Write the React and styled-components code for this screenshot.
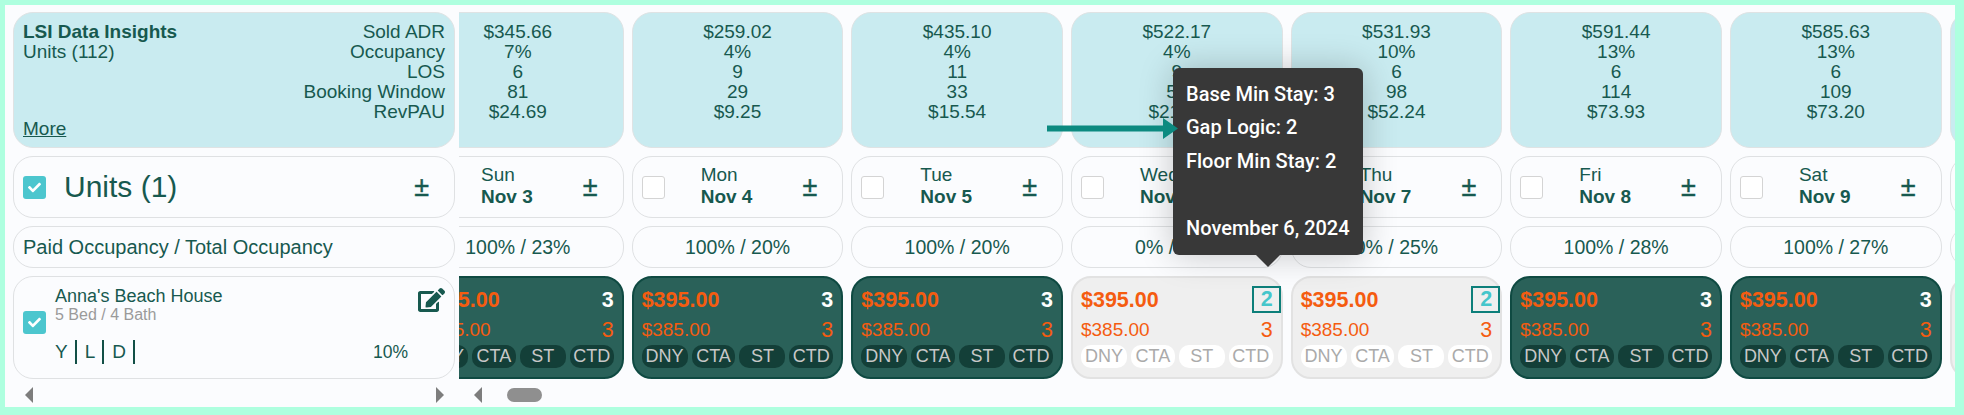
import React from "react";
import styled, { createGlobalStyle } from "styled-components";
import { FaEdit, FaCheck } from "react-icons/fa";

const INK = "#17594f";

const Global = createGlobalStyle`
  html, body { margin: 0; padding: 0; background: #aeffdf; }
  * { box-sizing: border-box; }
  body { font-family: "Liberation Sans", Arial, sans-serif; color: ${INK}; }
`;

const Frame = styled.div`
  width: 1964px;
  height: 415px;
  padding: 5px 9px 8px 5px;
  overflow: hidden;
`;

const Inner = styled.div`
  position: relative;
  display: flex;
  height: 100%;
  background: #fbfcfe;
`;

const LeftPanel = styled.div`
  flex: 0 0 454px;
  display: flex;
  flex-direction: column;
  gap: 8px;
  padding: 7px 4px 0 8px;
`;

const Scroller = styled.div`
  flex: 1;
  min-width: 0;
  overflow: hidden;
  display: flex;
  flex-direction: column;
  gap: 8px;
  padding-top: 7px;
`;

const DayRow = styled.div`
  display: flex;
  gap: 8px;
  margin-left: -47px;
`;

const InsightCard = styled.div`
  height: 136px;
  padding: 9px 9px 0 9px;
  background: #c9ebf0;
  border: 1px solid #dfe3e4;
  border-radius: 20px;
  font-size: 19px;
  line-height: 20px;
  display: flex;
  justify-content: space-between;
`;

const InsightLeft = styled.div`
  display: flex;
  flex-direction: column;
  align-items: flex-start;
`;

const InsightTitle = styled.strong`
  font-weight: 700;
`;

const MoreLink = styled.a`
  margin-top: auto;
  margin-bottom: 8px;
  text-decoration: underline;
  color: inherit;
`;

const InsightLabels = styled.div`
  text-align: right;
`;

const InsightDay = styled.div`
  flex: 0 0 211.67px;
  height: 136px;
  padding-top: 9px;
  background: #c9ebf0;
  border: 1px solid #dfe3e4;
  border-radius: 20px;
  font-size: 19px;
  line-height: 20px;
  text-align: center;
`;

const HeaderCard = styled.div`
  height: 62px;
  display: flex;
  align-items: center;
  padding: 0 25px 0 9px;
  background: #fbfcfe;
  border: 1px solid #dfe1e3;
  border-radius: 20px;
`;

const UnitsTitle = styled.span`
  flex: 1;
  margin-left: 18px;
  font-size: 30px;
  line-height: 34px;
`;

const PlusMinus = styled.span`
  font-size: 27px;
  line-height: 30px;
  font-weight: 400;
  -webkit-text-stroke: 0.4px ${INK};
`;

const DayHeader = styled.div`
  flex: 0 0 211.67px;
  height: 62px;
  display: flex;
  align-items: center;
  padding: 0 25px 0 9px;
  background: #fbfcfe;
  border: 1px solid #dfe1e3;
  border-radius: 20px;
`;

const DayLabel = styled.div`
  flex: 1;
  margin-left: 36px;
  padding-bottom: 2px;
  font-size: 19px;
  line-height: 22px;
`;

const DayDate = styled.div`
  font-weight: 700;
`;

const Box = styled.span`
  flex: none;
  width: 23px;
  height: 23px;
  border-radius: 3px;
  display: flex;
  align-items: center;
  justify-content: center;
  background: ${(p) => (p.$checked ? "#4cc6ce" : "#fff")};
  border: ${(p) => (p.$checked ? "none" : "1px solid #d4d4d4")};
  color: #fff;
  font-size: 13px;
`;

const OccLabel = styled.div`
  height: 42px;
  display: flex;
  align-items: center;
  padding-left: 9px;
  border: 1px solid #dfe1e3;
  border-radius: 20px;
  font-size: 20px;
`;

const OccCell = styled.div`
  flex: 0 0 211.67px;
  height: 42px;
  display: flex;
  align-items: center;
  justify-content: center;
  border: 1px solid #dfe1e3;
  border-radius: 20px;
  font-size: 19.5px;
`;

const UnitCard = styled.div`
  height: 103px;
  display: flex;
  padding: 9px 9px 0 9px;
  border: 1px solid #dfe1e3;
  border-radius: 20px;
`;

const UnitCheck = styled(Box)`
  margin-top: 25px;
`;

const UnitInfo = styled.div`
  flex: 1;
  margin-left: 9px;
  display: grid;
  grid-template-columns: 1fr auto;
  grid-template-rows: 20px 18px auto;
  align-content: start;
`;

const UnitName = styled.div`
  font-size: 18px;
  line-height: 20px;
`;

const UnitBeds = styled.div`
  grid-row: 2;
  font-size: 16px;
  line-height: 18px;
  color: #9a9a9a;
`;

const EditIcon = styled(FaEdit)`
  grid-column: 2;
  grid-row: 1 / span 2;
  margin-top: 2px;
  width: 27px;
  height: 24px;
  color: ${INK};
`;

const UnitFoot = styled.div`
  grid-column: 1 / span 2;
  margin-top: 16px;
  padding-right: 37px;
  display: flex;
  align-items: center;
  justify-content: space-between;
  font-size: 19px;
`;

const Flags = styled.div`
  display: flex;
`;

const Flag = styled.span`
  height: 24px;
  line-height: 24px;
  padding-right: 7px;
  margin-right: 8px;
  border-right: 2px solid #124f46;
`;

const Percent = styled.span`
  font-size: 17.5px;
`;

const RateCell = styled.div`
  flex: 0 0 211.67px;
  height: 103px;
  padding: 7px 8px 0 8px;
  border-radius: 20px;
  border: 2px solid ${(p) => (p.$booked ? "#0f4a42" : "#e2e2e2")};
  background: ${(p) => (p.$booked ? "#2a6159" : "#efefef")};
`;

const RateLine = styled.div`
  height: 30px;
  display: flex;
  align-items: center;
  justify-content: space-between;
  color: #f55c10;
  font-size: ${(p) => (p.$main ? "21.5px" : "19px")};
  font-weight: ${(p) => (p.$main ? 700 : 400)};
`;

const MinStay = styled.span`
  font-size: 21.5px;
  color: ${(p) => (p.$white ? "#fff" : "inherit")};
`;

const GapStay = styled.span`
  height: 27px;
  line-height: 23px;
  margin-top: -2px;
  margin-right: -8px;
  padding: 0 6px 0 7px;
  border: 2px solid #0d7f7a;
  color: #45c6cb;
  font-size: 21.5px;
`;

const Pills = styled.div`
  display: grid;
  grid-template-columns: 46fr 44fr 46fr 44fr;
  gap: 4px;
`;

const Pill = styled.span`
  height: 23px;
  line-height: 23px;
  border-radius: 10px;
  text-align: center;
  font-size: 18px;
  background: ${(p) => (p.$booked ? "#133f38" : "#fff")};
  color: ${(p) => (p.$booked ? "#c8c8c8" : "#aaa")};
`;

const ScrollBar = styled.div`
  display: flex;
  align-items: center;
  height: 16px;
`;

const LeftScroll = styled(ScrollBar)`
  justify-content: space-between;
  padding: 0 11px 0 12px;
`;

const RightScroll = styled(ScrollBar)`
  padding-left: 15px;
`;

const Arrow = styled.span`
  width: 0;
  height: 0;
  border-top: 8px solid transparent;
  border-bottom: 8px solid transparent;
  ${(p) =>
    p.$right
      ? "border-left: 8px solid #7d7d7d;"
      : "border-right: 8px solid #7d7d7d;"}
`;

const Thumb = styled.span`
  width: 35px;
  height: 14px;
  margin-left: 25px;
  background: #8f8f8f;
  border-radius: 8px;
`;

const Tooltip = styled.div`
  position: absolute;
  left: 1168px;
  top: 63px;
  width: 190px;
  height: 187px;
  padding: 10px 13px;
  background: #383838;
  border-radius: 6px;
  box-shadow: 0 0 34px rgba(0, 0, 0, 0.22);
  color: #fff;
  font-family: Roboto, "Liberation Sans", sans-serif;
  font-weight: 500;
  font-size: 20px;
  line-height: 33.4px;
  white-space: nowrap;
  &::after {
    content: "";
    position: absolute;
    left: 83px;
    bottom: -12px;
    border-left: 12px solid transparent;
    border-right: 12px solid transparent;
    border-top: 12px solid #383838;
  }
`;

const TooltipGap = styled.div`
  height: 33.4px;
`;

const Pointer = styled.svg`
  position: absolute;
  left: 1042px;
  top: 113px;
  width: 131px;
  height: 21px;
  overflow: visible;
`;

const DAYS = [
  { wd: "Sun", date: "Nov 3", vals: ["$345.66", "7%", "6", "81", "$24.69"], occ: "100% / 23%", booked: true },
  { wd: "Mon", date: "Nov 4", vals: ["$259.02", "4%", "9", "29", "$9.25"], occ: "100% / 20%", booked: true },
  { wd: "Tue", date: "Nov 5", vals: ["$435.10", "4%", "11", "33", "$15.54"], occ: "100% / 20%", booked: true },
  { wd: "Wed", date: "Nov 6", vals: ["$522.17", "4%", "9", "52", "$21.11"], occ: "0% / 24%", booked: false },
  { wd: "Thu", date: "Nov 7", vals: ["$531.93", "10%", "6", "98", "$52.24"], occ: "0% / 25%", booked: false },
  { wd: "Fri", date: "Nov 8", vals: ["$591.44", "13%", "6", "114", "$73.93"], occ: "100% / 28%", booked: true },
  { wd: "Sat", date: "Nov 9", vals: ["$585.63", "13%", "6", "109", "$73.20"], occ: "100% / 27%", booked: true },
  { wd: "Sun", date: "Nov 10", vals: ["$500.00", "9%", "6", "90", "$45.00"], occ: "100% / 20%", booked: false },
];

const TAGS = ["DNY", "CTA", "ST", "CTD"];

export default function App() {
  return (
    <Frame>
      <Global />
      <Inner>
        <LeftPanel>
          <InsightCard>
            <InsightLeft>
              <InsightTitle>LSI Data Insights</InsightTitle>
              <span>Units (112)</span>
              <MoreLink>More</MoreLink>
            </InsightLeft>
            <InsightLabels>
              <div>Sold ADR</div>
              <div>Occupancy</div>
              <div>LOS</div>
              <div>Booking Window</div>
              <div>RevPAU</div>
            </InsightLabels>
          </InsightCard>
          <HeaderCard>
            <Box $checked><FaCheck /></Box>
            <UnitsTitle>Units (1)</UnitsTitle>
            <PlusMinus>±</PlusMinus>
          </HeaderCard>
          <OccLabel>Paid Occupancy / Total Occupancy</OccLabel>
          <UnitCard>
            <UnitCheck $checked><FaCheck /></UnitCheck>
            <UnitInfo>
              <UnitName>Anna's Beach House</UnitName>
              <UnitBeds>5 Bed / 4 Bath</UnitBeds>
              <EditIcon />
              <UnitFoot>
                <Flags>
                  <Flag>Y</Flag>
                  <Flag>L</Flag>
                  <Flag>D</Flag>
                </Flags>
                <Percent>10%</Percent>
              </UnitFoot>
            </UnitInfo>
          </UnitCard>
          <LeftScroll>
            <Arrow />
            <Arrow $right />
          </LeftScroll>
        </LeftPanel>
        <Scroller>
          <DayRow>
            {DAYS.map((d) => (
              <InsightDay key={d.date}>
                {d.vals.map((v, i) => (
                  <div key={i}>{v}</div>
                ))}
              </InsightDay>
            ))}
          </DayRow>
          <DayRow>
            {DAYS.map((d) => (
              <DayHeader key={d.date}>
                <Box />
                <DayLabel>
                  <div>{d.wd}</div>
                  <DayDate>{d.date}</DayDate>
                </DayLabel>
                <PlusMinus>±</PlusMinus>
              </DayHeader>
            ))}
          </DayRow>
          <DayRow>
            {DAYS.map((d) => (
              <OccCell key={d.date}>{d.occ}</OccCell>
            ))}
          </DayRow>
          <DayRow>
            {DAYS.map((d) => (
              <RateCell key={d.date} $booked={d.booked}>
                <RateLine $main>
                  <span>$395.00</span>
                  {d.booked ? <MinStay $white>3</MinStay> : <GapStay>2</GapStay>}
                </RateLine>
                <RateLine>
                  <span>$385.00</span>
                  <MinStay>3</MinStay>
                </RateLine>
                <Pills>
                  {TAGS.map((t) => (
                    <Pill key={t} $booked={d.booked}>{t}</Pill>
                  ))}
                </Pills>
              </RateCell>
            ))}
          </DayRow>
          <RightScroll>
            <Arrow />
            <Thumb />
          </RightScroll>
        </Scroller>
        <Tooltip>
          <div>Base Min Stay: 3</div>
          <div>Gap Logic: 2</div>
          <div>Floor Min Stay: 2</div>
          <TooltipGap />
          <div>November 6, 2024</div>
        </Tooltip>
        <Pointer viewBox="0 0 131 21">
          <path d="M0 7.5H116V0L131 10.5L116 21V13.5H0Z" fill="#0c8a80" />
        </Pointer>
      </Inner>
    </Frame>
  );
}
